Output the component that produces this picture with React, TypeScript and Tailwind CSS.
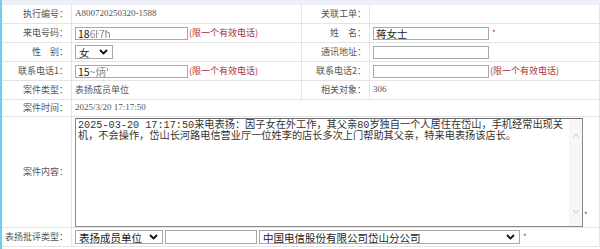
import React from "react";

const label = "flex items-center justify-end pr-[3px] border-r border-b border-[#e4e4e4] text-[9px] text-[#555] whitespace-nowrap";
const cell = "flex items-center pl-[3px] border-r border-b border-[#e4e4e4] whitespace-nowrap";
const serif = { fontFamily: '"Liberation Serif", "Noto Sans CJK SC", serif' };

function Chevron() {
  return (
    <svg width="9" height="6" viewBox="0 0 9 6" className="shrink-0">
      <path d="M1 1 L4.5 4.5 L8 1" fill="none" stroke="#111" strokeWidth="1.8" />
    </svg>
  );
}

function Input({ w, children }: { w: string; children?: React.ReactNode }) {
  return (
    <div className={`${w} h-[13px] border border-[#a8a8a8] bg-white pl-[2px] flex items-center text-[10.5px] leading-[11px] text-[#222]`}>
      {children}
    </div>
  );
}

function Select({ w, text }: { w: string; text: string }) {
  return (
    <div className={`${w} h-[14px] border border-[#a8a8a8] bg-white pl-[3px] pr-[4px] flex items-center justify-between text-[10.5px] leading-[11px] text-[#222]`}>
      <span>{text}</span>
      <Chevron />
    </div>
  );
}

function Hint() {
  return <span className="ml-[1px] text-[9px] text-[#a83232]">(限一个有效电话)</span>;
}

function Star() {
  return <span className="ml-[3px] text-[8px] text-[#c0303a]">*</span>;
}

export default function App() {
  return (
    <div className="w-[600px] h-[249px] bg-white overflow-hidden border-l-2 border-[#6fd0ee]" style={{ fontFamily: '"Noto Sans CJK SC", sans-serif' }}>
      <div className="h-[5px] bg-[#eceef8]" />
      <div className="grid grid-cols-[70px_230px_68px_1fr] grid-rows-[19px_19px_19px_19px_19px_17px_111px_19px]">
        {/* 行 1 */}
        <div className={label}>执行编号：</div>
        <div className={`${cell} text-[9px] text-[#555]`} style={serif}>A800720250320-1588</div>
        <div className={label}>关联工单：</div>
        <div className={cell}></div>

        {/* 行 2 */}
        <div className={label}>来电号码：</div>
        <div className={cell}>
          <Input w="w-[113px]">
            <span>18</span>
            <span className="blur-[0.7px] text-[#888]">6ŀ7ħ</span>
          </Input>
          <Hint />
        </div>
        <div className={label}>姓　名：</div>
        <div className={cell}>
          <Input w="w-[116px]">蒋女士</Input>
          <Star />
        </div>

        {/* 行 3 */}
        <div className={label}>性　别：</div>
        <div className={cell}>
          <Select w="w-[38px]" text="女" />
        </div>
        <div className={label}>通讯地址：</div>
        <div className={cell}>
          <Input w="w-[116px]" />
        </div>

        {/* 行 4 */}
        <div className={label}>联系电话1：</div>
        <div className={cell}>
          <Input w="w-[113px]">
            <span>15</span>
            <span className="blur-[0.7px] text-[#888]">~炳'</span>
          </Input>
          <Hint />
        </div>
        <div className={label}>联系电话2：</div>
        <div className={cell}>
          <Input w="w-[116px]" />
          <Hint />
        </div>

        {/* 行 5 */}
        <div className={label}>案件类型：</div>
        <div className={`${cell} text-[9px] text-[#555]`}>表扬成员单位</div>
        <div className={label}>相关对象：</div>
        <div className={`${cell} text-[9px] text-[#555]`} style={serif}>306</div>

        {/* 行 6 */}
        <div className={label}>案件时间：</div>
        <div className={`${cell} col-span-3 text-[9px] text-[#555]`} style={serif}>2025/3/20 17:17:50</div>

        {/* 行 7 */}
        <div className={label}>案件内容：</div>
        <div className={`${cell} col-span-3 items-start pt-[1px]`}>
          <div className="w-[508px] h-[109px] border border-[#8a8a8a] border-t-[#6e6e6e] flex">
            <div
              className="flex-1 pl-[2px] pt-[1px] text-[10.2px] leading-[11px] text-[#333]"
              style={{ fontFamily: '"Liberation Mono", "Noto Sans CJK SC", monospace' }}
            >
              <div>2025-03-20 17:17:50来电表扬：因子女在外工作，其父亲80岁独自一个人居住在岱山，手机经常出现关</div>
              <div>机，不会操作，岱山长河路电信营业厅一位姓李的店长多次上门帮助其父亲，特来电表扬该店长。</div>
            </div>
            <div className="w-[13px] bg-[#f7f7f7] flex flex-col items-center justify-between pt-[14px] pb-[12px]">
              <svg width="8" height="5" viewBox="0 0 8 5">
                <path d="M1 4 L4 1 L7 4" fill="none" stroke="#c4c4c4" strokeWidth="1" />
              </svg>
              <svg width="8" height="5" viewBox="0 0 8 5">
                <path d="M1 1 L4 4 L7 1" fill="none" stroke="#c4c4c4" strokeWidth="1" />
              </svg>
            </div>
          </div>
          <span className="self-end mb-[6px] ml-[1px] text-[8px] text-[#c0303a]">*</span>
        </div>

        {/* 行 8 */}
        <div className={label}>表扬批评类型：</div>
        <div className={`${cell} col-span-3`}>
          <Select w="w-[88px]" text="表扬成员单位" />
          <div className="ml-[2px] w-[92px] h-[14px] border border-[#a8a8a8] bg-white" />
          <Select w="ml-[2px] w-[261px]" text="中国电信股份有限公司岱山分公司" />
          <Star />
        </div>
      </div>
    </div>
  );
}
